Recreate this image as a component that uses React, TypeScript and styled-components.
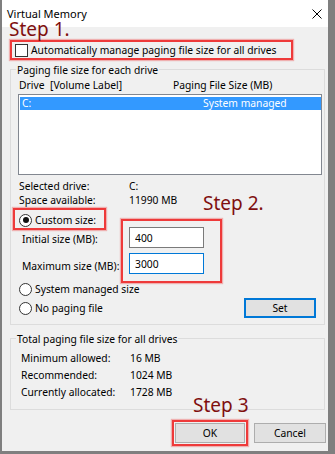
import React from "react";
import styled, { createGlobalStyle } from "styled-components";

const Colors = {
  face: "#f0f0f0",
  frame: "#7f7f7f",
  groupLine: "#dcdcdc",
  step: "#7f0f0f",
  mark: "#ee3a3a",
  focus: "#0078d7",
  select: "#3399ff",
  button: "#e1e1e1",
};

const GlobalStyle = createGlobalStyle`
  body {
    margin: 0;
    background: #fff;
  }
  * {
    box-sizing: border-box;
  }
`;

const Window = styled.div`
  position: relative;
  width: 335px;
  height: 454px;
  display: flex;
  flex-direction: column;
  border-left: 2px solid ${Colors.frame};
  border-right: 7px solid ${Colors.frame};
  border-bottom: 3px solid ${Colors.frame};
  background: ${Colors.face};
  font-family: "Segoe UI", "Noto Sans", sans-serif;
  font-size: 10.3px;
  color: #000;
  overflow: hidden;
`;

const TitleBar = styled.div`
  flex: none;
  height: 27px;
  display: flex;
  align-items: center;
  justify-content: space-between;
  padding: 0 3px 0 5px;
  background: #fff;
  font-size: 11px;
  line-height: 14px;
`;

const Body = styled.div`
  flex: 1;
  display: flex;
  flex-direction: column;
  padding: 0 3px 0 8px;
`;

// the red "Step n" notes drawn over the dialog
const StepLabel = styled.div<{ $x: number; $y: number }>`
  position: absolute;
  left: ${(p) => p.$x}px;
  top: ${(p) => p.$y}px;
  font-size: 19px;
  line-height: 16px;
  color: ${Colors.step};
  pointer-events: none;
`;

const Marked = styled.div`
  border: 2px solid ${Colors.mark};
  box-shadow: 0 0 1px 1px rgba(238, 58, 58, 0.35);
`;

const AutoBox = styled(Marked)`
  margin-top: 13px;
  width: 283px;
  height: 20px;
  display: flex;
  align-items: center;
  gap: 3px;
  padding-left: 3px;
`;

const CheckBox = styled.span`
  width: 13px;
  height: 13px;
  border: 1px solid #333;
  background: #fff;
`;

const Group = styled.div<{ $top: number; $bottom: number }>`
  margin-top: ${(p) => p.$top}px;
  display: flex;
  flex-direction: column;
  border: 1px solid ${Colors.groupLine};
  padding: 0 2px ${(p) => p.$bottom}px 2px;
`;

const GroupTitle = styled.div`
  align-self: flex-start;
  margin: -7px 0 0 3px;
  padding: 0 1px;
  line-height: 14px;
  background: ${Colors.face};
`;

const ListHeader = styled.div`
  margin: 1px 0 0 6px;
  display: grid;
  grid-template-columns: 31px 123px 1fr;
  line-height: 14px;
`;

const ListBox = styled.div`
  margin: 2px 0 0 5px;
  height: 81px;
  border: 1px solid #828790;
  background: #fff;
  padding: 2px 0 0 1px;
`;

const ListRow = styled.div<{ $selected?: boolean }>`
  display: grid;
  grid-template-columns: 181px 1fr;
  height: 13px;
  line-height: 13px;
  padding-left: 2px;
  background: ${(p) => (p.$selected ? Colors.select : "transparent")};
  color: ${(p) => (p.$selected ? "#fff" : "#000")};
`;

const InfoGrid = styled.div<{ $top: number; $left: number; $col: number; $row: number }>`
  margin: ${(p) => p.$top}px 0 0 ${(p) => p.$left}px;
  display: grid;
  grid-template-columns: ${(p) => p.$col}px auto;
  line-height: ${(p) => p.$row}px;
`;

const OptionsRow = styled.div`
  margin-top: 1px;
  display: flex;
  align-items: flex-start;
`;

const LeftCol = styled.div`
  width: 108px;
  display: flex;
  flex-direction: column;
`;

const CustomBox = styled(Marked)`
  width: 93px;
  height: 22px;
  display: flex;
  align-items: center;
  gap: 3px;
  padding: 2px 0 0 4px;
`;

const Radio = styled.span<{ $checked?: boolean }>`
  position: relative;
  width: 13px;
  height: 13px;
  flex: none;
  border: 1px solid #333;
  border-radius: 50%;
  background: #fff;

  &::after {
    content: "";
    display: ${(p) => (p.$checked ? "block" : "none")};
    position: absolute;
    left: 2.5px;
    top: 2.5px;
    width: 6px;
    height: 6px;
    border-radius: 50%;
    background: #111;
  }
`;

const FieldLabel = styled.div<{ $top: number }>`
  margin: ${(p) => p.$top}px 0 0 9px;
  line-height: 14px;
`;

const SizeBox = styled(Marked)`
  margin-top: 11px;
  display: flex;
  flex-direction: column;
  gap: 5px;
  padding: 6px 16px 7px 6px;
`;

const SizeInput = styled.input<{ $focused?: boolean }>`
  width: 75px;
  height: 21px;
  margin: 0;
  padding: 0 0 0 5px;
  border: 1px solid ${(p) => (p.$focused ? Colors.focus : "#7a7a7a")};
  background: #fff;
  font: inherit;
  color: #000;
  outline: none;
`;

const RadioRow = styled.div<{ $top: number }>`
  margin: ${(p) => p.$top}px 0 0 6px;
  height: 14px;
  display: flex;
  align-items: center;
  gap: 3px;
`;

const SetRow = styled.div`
  margin-top: 2px;
  height: 20px;
  display: flex;
  align-items: center;
  justify-content: space-between;
`;

const Button = styled.button<{ $focused?: boolean; $w: number }>`
  width: ${(p) => p.$w}px;
  height: 20px;
  margin: 0;
  padding: 0;
  border: ${(p) => (p.$focused ? `2px solid ${Colors.focus}` : "1px solid #adadad")};
  background: ${Colors.button};
  font: inherit;
  color: #000;
`;

const Footer = styled.div`
  margin: 10px -1px 0 0;
  display: flex;
  justify-content: flex-end;
  align-items: center;
  gap: 6px;
`;

const OkMark = styled(Marked)`
  padding: 1px;
`;

const CloseIcon = () => (
  <svg width="10" height="10" viewBox="0 0 10 10" style={{ marginRight: 3 }}>
    <path d="M0.5 0.5 L9.5 9.5 M9.5 0.5 L0.5 9.5" stroke="#000" strokeWidth="1" />
  </svg>
);

export default function App() {
  return (
    <>
      <GlobalStyle />
      <Window>
        <TitleBar>
          <span>Virtual Memory</span>
          <CloseIcon />
        </TitleBar>
        <Body>
          <AutoBox>
            <CheckBox />
            <span>Automatically manage paging file size for all drives</span>
          </AutoBox>

          <Group $top={9} $bottom={6}>
            <GroupTitle>Paging file size for each drive</GroupTitle>
            <ListHeader>
              <span>Drive</span>
              <span>[Volume Label]</span>
              <span>Paging File Size (MB)</span>
            </ListHeader>
            <ListBox>
              <ListRow $selected>
                <span>C:</span>
                <span>System managed</span>
              </ListRow>
            </ListBox>
            <InfoGrid $top={4} $left={6} $col={110} $row={14}>
              <span>Selected drive:</span>
              <span>C:</span>
              <span>Space available:</span>
              <span>11990 MB</span>
            </InfoGrid>
            <OptionsRow>
              <LeftCol>
                <CustomBox>
                  <Radio $checked />
                  <span>Custom size:</span>
                </CustomBox>
                <FieldLabel $top={2}>Initial size (MB):</FieldLabel>
                <FieldLabel $top={13}>Maximum size (MB):</FieldLabel>
              </LeftCol>
              <SizeBox>
                <SizeInput readOnly value="400" />
                <SizeInput readOnly value="3000" $focused />
              </SizeBox>
            </OptionsRow>
            <RadioRow $top={-1}>
              <Radio />
              <span>System managed size</span>
            </RadioRow>
            <SetRow>
              <RadioRow $top={0}>
                <Radio />
                <span>No paging file</span>
              </RadioRow>
              <Button $w={72} $focused style={{ marginRight: 6 }}>
                Set
              </Button>
            </SetRow>
          </Group>

          <Group $top={13} $bottom={8}>
            <GroupTitle>Total paging file size for all drives</GroupTitle>
            <InfoGrid $top={4} $left={8} $col={109} $row={17}>
              <span>Minimum allowed:</span>
              <span>16 MB</span>
              <span>Recommended:</span>
              <span>1024 MB</span>
              <span>Currently allocated:</span>
              <span>1728 MB</span>
            </InfoGrid>
          </Group>

          <Footer>
            <OkMark>
              <Button $w={70}>OK</Button>
            </OkMark>
            <Button $w={72}>Cancel</Button>
          </Footer>
        </Body>

        <StepLabel $x={7} $y={21}>Step 1.</StepLabel>
        <StepLabel $x={201} $y={195}>Step 2.</StepLabel>
        <StepLabel $x={191} $y={397}>Step 3</StepLabel>
      </Window>
    </>
  );
}
